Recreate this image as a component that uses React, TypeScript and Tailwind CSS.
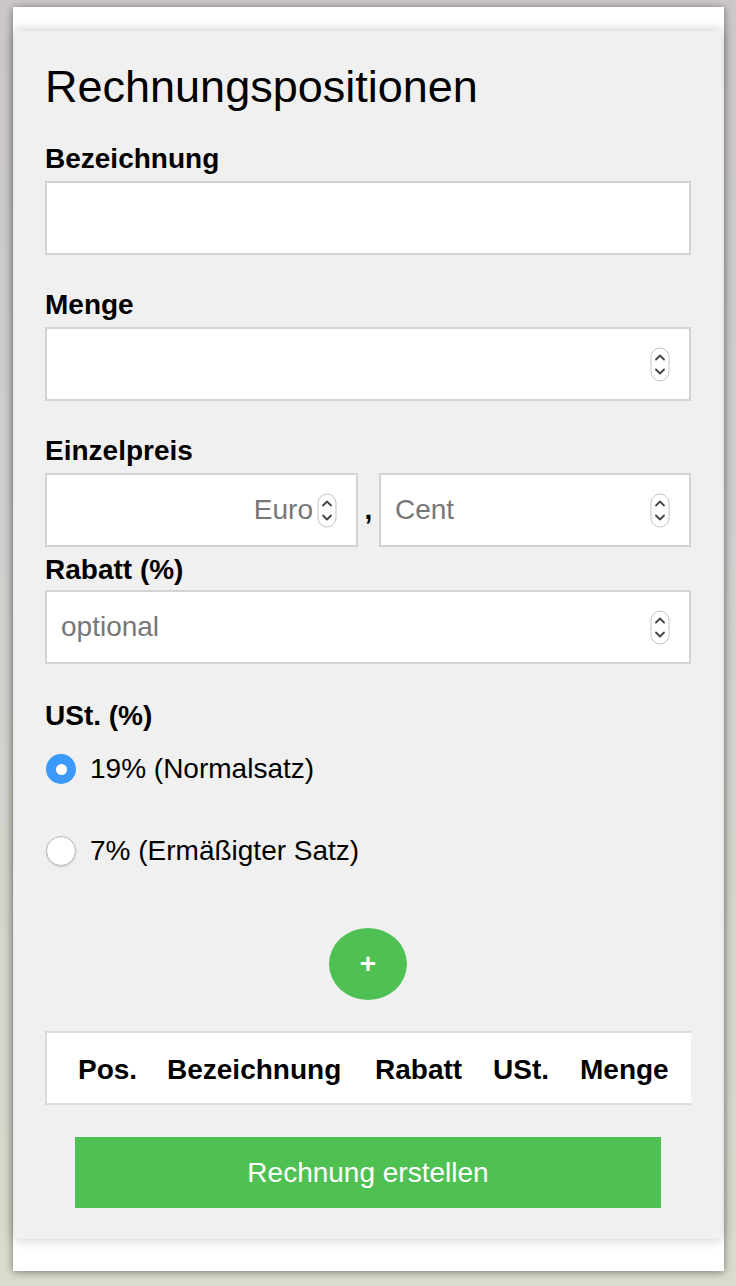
import React from "react";

const font = { fontFamily: '"Liberation Sans", Arial, Helvetica, sans-serif' };

function Spinner() {
  return (
    <svg width="20" height="35" viewBox="0 0 20 35" className="shrink-0">
      <rect x="1" y="1" width="18" height="33" rx="9" fill="#fff" stroke="#c4c4c4" strokeWidth="1" />
      <path d="M6 12.5 L10 8.5 L14 12.5" fill="none" stroke="#444" strokeWidth="1.8" strokeLinecap="round" strokeLinejoin="round" />
      <path d="M6 22.5 L10 26.5 L14 22.5" fill="none" stroke="#444" strokeWidth="1.8" strokeLinecap="round" strokeLinejoin="round" />
    </svg>
  );
}

function Label({ children, className = "" }: { children: React.ReactNode; className?: string }) {
  return <div className={`text-[28px] leading-none font-bold text-black ${className}`}>{children}</div>;
}

export default function App() {
  return (
    <div
      style={font}
      className="w-[736px] min-h-[1286px] bg-gradient-to-b from-[#cbc7cb] via-[#d3d2cf] to-[#dadccc] pt-[7px] pl-[13px]"
    >
      <div className="w-[711px] h-[1264px] bg-white pt-[24px] pl-px pr-[2px] shadow-[0_1px_8px_rgba(0,0,0,0.45)]">
        <div className="h-[1208px] bg-[#f0f0f0] px-[31px] pt-[33px] shadow-[0_0_12px_rgba(0,0,0,0.22)]">
          <h1 className="text-[45px] leading-none font-normal text-black">Rechnungspositionen</h1>

          <Label className="mt-[36px]">Bezeichnung</Label>
          <div className="mt-[8px] h-[74px] bg-white border-2 border-[#d3d3d3]" />

          <Label className="mt-[36px]">Menge</Label>
          <div className="mt-[8px] h-[74px] bg-white border-2 border-[#d3d3d3] flex items-center justify-end pr-[19px]">
            <Spinner />
          </div>

          <Label className="mt-[36px]">Einzelpreis</Label>
          <div className="mt-[8px] flex items-center">
            <div className="w-[313px] h-[74px] bg-white border-2 border-[#d3d3d3] flex items-center justify-end pr-[19px] gap-[4px]">
              <span className="text-[28px] leading-none text-[#777]">Euro</span>
              <Spinner />
            </div>
            <span className="w-[21px] text-center text-[28px] leading-none font-bold text-black">,</span>
            <div className="flex-1 h-[74px] bg-white border-2 border-[#d3d3d3] flex items-center justify-between pl-[14px] pr-[19px]">
              <span className="text-[28px] leading-none text-[#777]">Cent</span>
              <Spinner />
            </div>
          </div>

          <Label className="mt-[9px]">Rabatt (%)</Label>
          <div className="mt-[6px] h-[74px] bg-white border-2 border-[#d3d3d3] flex items-center justify-between pl-[14px] pr-[19px]">
            <span className="text-[28px] leading-none text-[#777]">optional</span>
            <Spinner />
          </div>

          <Label className="mt-[38px]">USt. (%)</Label>

          <div className="mt-[24px] flex items-center gap-[14px]">
            <span className="ml-px w-[30px] h-[30px] rounded-full bg-[#3b99fc] flex items-center justify-center">
              <span className="w-[11px] h-[11px] rounded-full bg-white" />
            </span>
            <span className="text-[28px] leading-none text-black">19% (Normalsatz)</span>
          </div>

          <div className="mt-[52px] flex items-center gap-[14px]">
            <span className="ml-px w-[30px] h-[30px] rounded-full bg-white border border-[#b9b9b9] shadow-[0_1px_2px_rgba(0,0,0,0.15)]" />
            <span className="text-[28px] leading-none text-black">7% (Ermäßigter Satz)</span>
          </div>

          <div className="mt-[62px] flex justify-center">
            <div className="w-[78px] h-[72px] rounded-[50%] bg-[#4fc153] flex items-center justify-center text-white text-[28px] leading-none font-bold">
              +
            </div>
          </div>

          <div className="mt-[31px] h-[74px] bg-white border-y-2 border-l-2 border-[#dcdcdc] flex items-center pl-[31px] pt-[4px] text-[28px] leading-none font-bold text-black">
            <span className="w-[89px]">Pos.</span>
            <span className="w-[208px]">Bezeichnung</span>
            <span className="w-[118px]">Rabatt</span>
            <span className="w-[87px]">USt.</span>
            <span>Menge</span>
          </div>

          <div className="mt-[32px] mx-[30px] h-[71px] bg-[#4fc153] flex items-center justify-center text-white text-[28px] leading-none">
            Rechnung erstellen
          </div>
        </div>
      </div>
    </div>
  );
}
